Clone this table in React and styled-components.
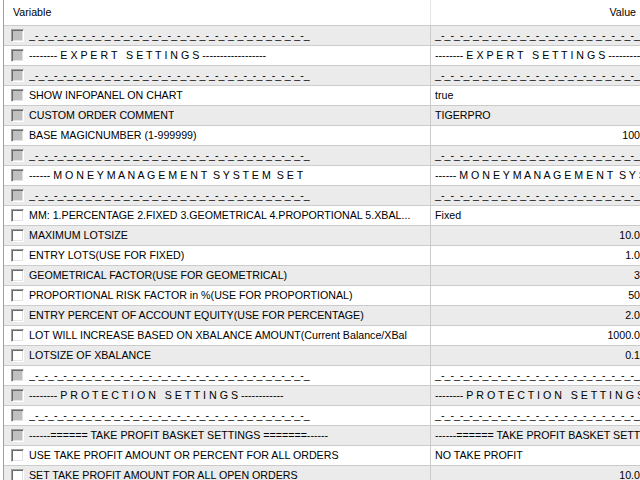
import React from 'react';
import styled, { createGlobalStyle } from 'styled-components';

const GlobalStyle = createGlobalStyle`
  body {
    margin: 0;
    background: #fff;
  }
`;

const Frame = styled.div`
  width: 640px;
  height: 480px;
  overflow: hidden;
  box-sizing: border-box;
  padding-left: 3px;
  background: #fff;
  font-family: "Liberation Sans", Arial, sans-serif;
  font-size: 10.67px;
  color: #000;
`;

const List = styled.div`
  width: 660px;
  height: 100%;
  border-left: 1px solid #a0a0a0;
`;

const Header = styled.div`
  display: grid;
  grid-template-columns: 427px 215px;
  height: 26px;
  box-sizing: border-box;
  border-bottom: 1px solid #cbcbcb;
`;

const HeadCell = styled.div`
  display: flex;
  align-items: center;
  justify-content: ${(p) => (p.$right ? 'flex-end' : 'flex-start')};
  padding: ${(p) => (p.$right ? '0 9px 1px 0' : '0 0 1px 9px')};
  border-right: 1px solid ${(p) => (p.$right ? 'transparent' : '#e5e5e5')};
`;

const Row = styled.div`
  display: grid;
  grid-template-columns: 427px 215px;
  height: 20px;
  box-sizing: border-box;
  border-bottom: 1px solid #cbcbcb;
  background: ${(p) => (p.$shade ? '#ebebeb' : '#fff')};
`;

const NameCell = styled.div`
  display: flex;
  align-items: center;
  padding: 0 0 1px 7px;
  border-right: 1px solid #cbcbcb;
  overflow: hidden;
  white-space: pre;
`;

const ValueCell = styled.div`
  display: flex;
  align-items: center;
  justify-content: ${(p) => (p.$right ? 'flex-end' : 'flex-start')};
  padding: 0 6px 1px 4px;
  overflow: hidden;
  white-space: pre;
`;

const Check = styled.span`
  flex: none;
  width: 13px;
  height: 13px;
  box-sizing: border-box;
  margin: 1px 5px 0 0;
  border: 1px solid;
  border-color: #a0a0a0 #fff #fff #a0a0a0;
  box-shadow: inset 1px 1px 0 #696969, inset -1px -1px 0 #e3e3e3;
  background: ${(p) => (p.$locked ? '#c0c0c0' : '#fff')};
`;

const Label = styled.span`
  overflow: hidden;
`;

const DASH = '_-'.repeat(29) + '_';
const EXPERT = '--------' + ' E X P E R T   S E T T I N G S ' + '-'.repeat(18);
const MONEY = '------' + ' M O N E Y M A N A G E M E N T  S Y S T E M  S E T';
const PROTECT = '--------' + ' P R O T E C T I O N   S E T T I N G S ' + '-'.repeat(12);
const BASKET = '------====== TAKE PROFIT BASKET SETTINGS =======------';

const rows = [
  { name: DASH, value: DASH, locked: true },
  { name: EXPERT, value: EXPERT, locked: true },
  { name: DASH, value: DASH, locked: true },
  { name: 'SHOW INFOPANEL ON CHART', value: 'true', locked: true },
  { name: 'CUSTOM ORDER COMMENT', value: 'TIGERPRO', locked: true },
  { name: 'BASE MAGICNUMBER (1-999999)', value: '100', right: true, locked: true },
  { name: DASH, value: DASH, locked: true },
  { name: MONEY, value: MONEY, locked: true },
  { name: DASH, value: DASH, locked: true },
  { name: 'MM: 1.PERCENTAGE 2.FIXED 3.GEOMETRICAL 4.PROPORTIONAL 5.XBAL...', value: 'Fixed' },
  { name: 'MAXIMUM LOTSIZE', value: '10.0', right: true },
  { name: 'ENTRY LOTS(USE FOR FIXED)', value: '1.0', right: true },
  { name: 'GEOMETRICAL FACTOR(USE FOR GEOMETRICAL)', value: '3', right: true },
  { name: 'PROPORTIONAL RISK FACTOR in %(USE FOR PROPORTIONAL)', value: '50', right: true },
  { name: 'ENTRY PERCENT OF ACCOUNT EQUITY(USE FOR PERCENTAGE)', value: '2.0', right: true },
  { name: 'LOT WILL INCREASE BASED ON XBALANCE AMOUNT(Current Balance/XBal', value: '1000.0', right: true },
  { name: 'LOTSIZE OF XBALANCE', value: '0.1', right: true },
  { name: DASH, value: DASH, locked: true },
  { name: PROTECT, value: PROTECT, locked: true },
  { name: DASH, value: DASH, locked: true },
  { name: BASKET, value: BASKET, locked: true },
  { name: 'USE TAKE PROFIT AMOUNT OR PERCENT FOR ALL ORDERS', value: 'NO TAKE PROFIT' },
  { name: 'SET TAKE PROFIT AMOUNT FOR ALL OPEN ORDERS', value: '10.0', right: true },
];

const App = () => (
  <Frame>
    <GlobalStyle />
    <List>
      <Header>
        <HeadCell>Variable</HeadCell>
        <HeadCell $right>Value</HeadCell>
      </Header>
      {rows.map((row, i) => (
        <Row key={i} $shade={i % 2 === 0}>
          <NameCell>
            <Check $locked={row.locked} />
            <Label>{row.name}</Label>
          </NameCell>
          <ValueCell $right={row.right}>{row.value}</ValueCell>
        </Row>
      ))}
    </List>
  </Frame>
);

export default App;
